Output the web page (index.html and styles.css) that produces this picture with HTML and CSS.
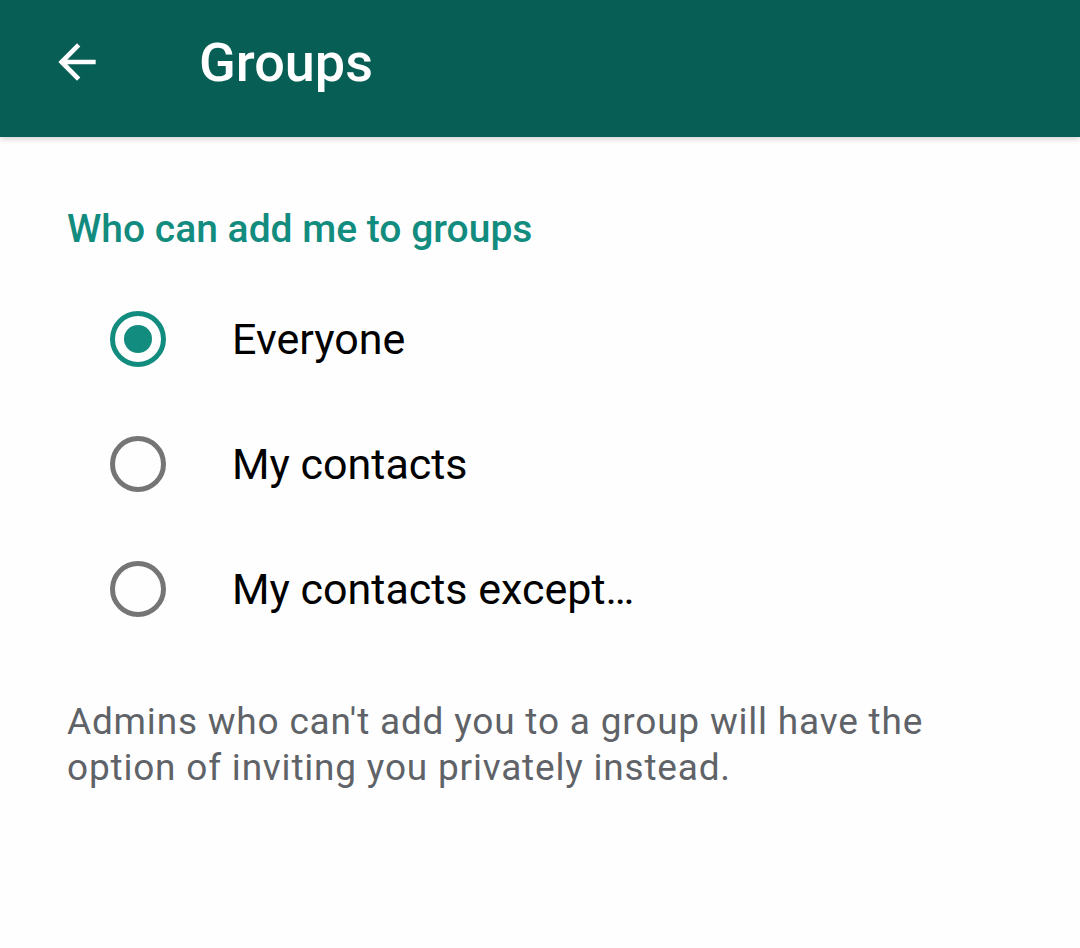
FILE: index.html
```html
<!DOCTYPE html>
<html lang="en">
<head>
    <meta charset="UTF-8">
    <meta name="viewport" content="width=device-width, initial-scale=1.0">
    <title>Groups</title>
    <link rel="stylesheet" href="styles.css">
</head>
<body>
    <header class="toolbar">
        <svg class="back" viewBox="0 0 24 24" width="56" height="56">
            <path d="M20 11H7.83l5.59-5.59L12 4l-8 8 8 8 1.41-1.41L7.83 13H20v-2z" fill="#fff"/>
        </svg>
        <h1>Groups</h1>
    </header>

    <main class="content">
        <h2 class="section-title">Who can add me to groups</h2>
        <div class="options">
            <label class="option">
                <span class="radio checked"></span>
                <span>Everyone</span>
            </label>
            <label class="option">
                <span class="radio"></span>
                <span>My contacts</span>
            </label>
            <label class="option">
                <span class="radio"></span>
                <span>My contacts except…</span>
            </label>
        </div>
        <p class="note">Admins who can't add you to a group will have the option of inviting you privately instead.</p>
    </main>
</body>
</html>
```

FILE: styles.css
```css
body {
    margin: 0;
    padding: 0;
    background: #fefefe;
    font-family: Roboto, "Noto Sans", sans-serif;
    height: 948px;
    overflow: hidden;
}

.toolbar {
    height: 137px;
    background: #075e55;
    display: flex;
    align-items: center;
    box-shadow: 0 2px 6px rgba(0, 0, 0, 0.18);
    position: relative;
    z-index: 2;
}

.back {
    margin-left: 49px;
    margin-top: -13px;
}

.toolbar h1 {
    margin: 0 0 0 94px;
    margin-top: -13px;
    color: #fff;
    font-size: 54px;
    font-weight: 500;
}

.content {
    padding: 70px 67px 0;
}

.section-title {
    margin: 0;
    color: #128c7e;
    font-size: 39px;
    font-weight: 500;
    line-height: 44px;
}

.options {
    display: flex;
    flex-direction: column;
    margin-top: 31px;
}

.option {
    display: flex;
    align-items: center;
    height: 125px;
    font-size: 43px;
    color: #000;
}

.option:first-child {
    margin-top: -6px;
}

.radio {
    box-sizing: border-box;
    width: 56px;
    height: 56px;
    border: 5px solid #757575;
    border-radius: 50%;
    margin-left: 43px;
    margin-right: 66px;
    display: flex;
    align-items: center;
    justify-content: center;
}

.radio.checked {
    border-color: #128c7e;
}

.radio.checked::after {
    content: '';
    width: 28px;
    height: 28px;
    border-radius: 50%;
    background: #128c7e;
}

.note {
    margin: 48px 0 0;
    color: #5f6368;
    font-size: 37px;
    letter-spacing: 0.8px;
    line-height: 46px;
    max-width: 900px;
}
```
